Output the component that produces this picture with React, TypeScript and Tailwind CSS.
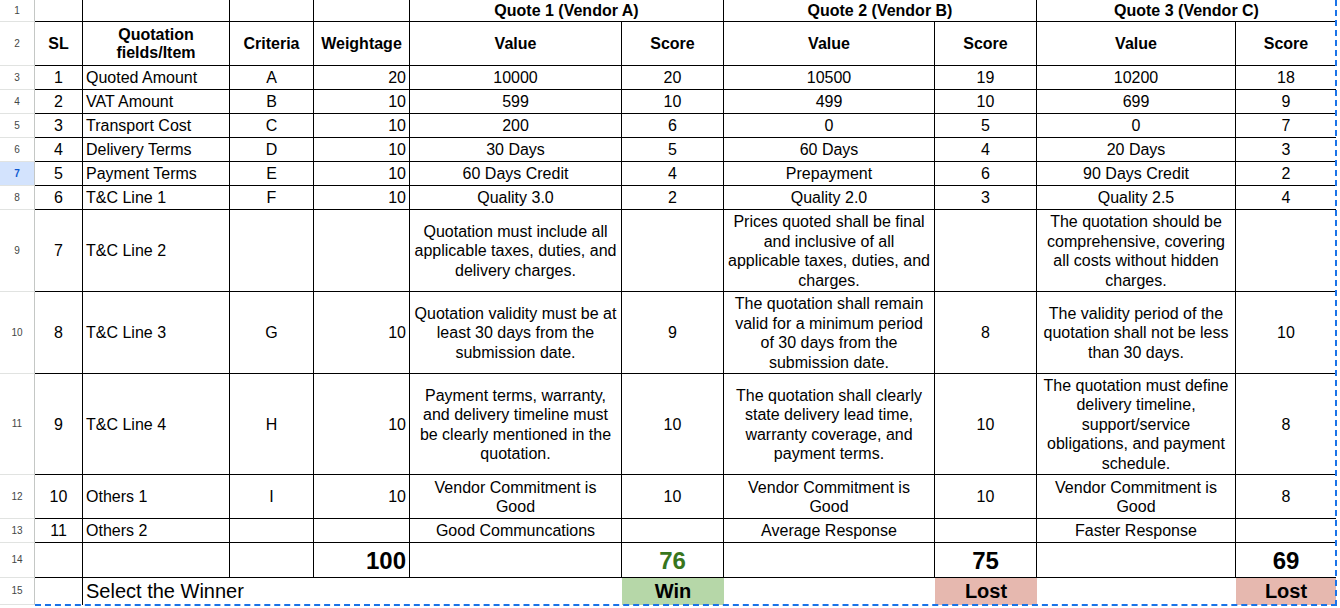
import type { ReactNode } from 'react';

type Row = [string, string, string, string, string, string, string, string, string, string];

const items: Row[] = [
  ['1', 'Quoted Amount', 'A', '20', '10000', '20', '10500', '19', '10200', '18'],
  ['2', 'VAT Amount', 'B', '10', '599', '10', '499', '10', '699', '9'],
  ['3', 'Transport Cost', 'C', '10', '200', '6', '0', '5', '0', '7'],
  ['4', 'Delivery Terms', 'D', '10', '30 Days', '5', '60 Days', '4', '20 Days', '3'],
  ['5', 'Payment Terms', 'E', '10', '60 Days Credit', '4', 'Prepayment', '6', '90 Days Credit', '2'],
  ['6', 'T&C Line 1', 'F', '10', 'Quality 3.0', '2', 'Quality 2.0', '3', 'Quality 2.5', '4'],
  [
    '7', 'T&C Line 2', '', '',
    'Quotation must include all applicable taxes, duties, and delivery charges.', '',
    'Prices quoted shall be final and inclusive of all applicable taxes, duties, and charges.', '',
    'The quotation should be comprehensive, covering all costs without hidden charges.', '',
  ],
  [
    '8', 'T&C Line 3', 'G', '10',
    'Quotation validity must be at least 30 days from the submission date.', '9',
    'The quotation shall remain valid for a minimum period of 30 days from the submission date.', '8',
    'The validity period of the quotation shall not be less than 30 days.', '10',
  ],
  [
    '9', 'T&C Line 4', 'H', '10',
    'Payment terms, warranty, and delivery timeline must be clearly mentioned in the quotation.', '10',
    'The quotation shall clearly state delivery lead time, warranty coverage, and payment terms.', '10',
    'The quotation must define delivery timeline, support/service obligations, and payment schedule.', '8',
  ],
  ['10', 'Others 1', 'I', '10', 'Vendor Commitment is Good', '10', 'Vendor Commitment is Good', '10', 'Vendor Commitment is Good', '8'],
  ['11', 'Others 2', '', '', 'Good Communcations', '', 'Average Response', '', 'Faster Response', ''],
];

function RowHead({ n, active }: { n: number; active?: boolean }) {
  return (
    <div
      className={`flex items-center justify-center border-r border-b border-r-[#c4c7c5] border-b-[#e1e3e1] text-[10px] ${
        active ? 'bg-[#d3e3fd] text-[#0b57d0] font-semibold' : 'bg-white text-[#444746]'
      }`}
    >
      {n}
    </div>
  );
}

function Cell({
  children,
  span,
  align = 'center',
  last,
  noBorder,
  className = '',
}: {
  children?: ReactNode;
  span?: 'col-span-2' | 'col-span-4';
  align?: 'left' | 'center' | 'right';
  last?: boolean;
  noBorder?: boolean;
  className?: string;
}) {
  const justify =
    align === 'left'
      ? 'justify-start text-left pl-[3px]'
      : align === 'right'
        ? 'justify-end text-right pr-[3px]'
        : 'justify-center text-center px-[3px]';
  const border = noBorder ? '' : last ? 'border-b border-black' : 'border-r border-b border-black';
  return <div className={`flex items-center pt-px ${justify} ${border} ${span ?? ''} ${className}`}>{children}</div>;
}

export default function App() {
  return (
    <div className="relative w-[1340px] h-[608px] overflow-hidden bg-white text-black font-['Liberation_Sans',Arial,sans-serif] text-[16px] leading-[19.5px]">
      <div className="grid grid-cols-[35px_48px_147px_84px_96px_212px_102px_211px_102px_199px_100px_1fr] grid-rows-[22px_44px_24px_24px_24px_24px_24px_24px_82px_82px_101px_44px_24px_35px_27px]">
        {/* row 1: vendor groups */}
        <RowHead n={1} />
        <Cell />
        <Cell />
        <Cell />
        <Cell />
        <Cell span="col-span-2" className="font-bold">Quote 1 (Vendor A)</Cell>
        <Cell span="col-span-2" className="font-bold">Quote 2 (Vendor B)</Cell>
        <Cell span="col-span-2" last className="font-bold">Quote 3 (Vendor C)</Cell>
        <div />

        {/* row 2: column titles */}
        <RowHead n={2} />
        <Cell className="font-bold">SL</Cell>
        <Cell className="font-bold leading-[18px]">Quotation fields/Item</Cell>
        <Cell className="font-bold">Criteria</Cell>
        <Cell className="font-bold">Weightage</Cell>
        <Cell className="font-bold">Value</Cell>
        <Cell className="font-bold">Score</Cell>
        <Cell className="font-bold">Value</Cell>
        <Cell className="font-bold">Score</Cell>
        <Cell className="font-bold">Value</Cell>
        <Cell last className="font-bold">Score</Cell>
        <div />

        {items.map((r, i) => (
          <div key={r[0]} className="contents">
            <RowHead n={i + 3} active={i + 3 === 7} />
            <Cell>{r[0]}</Cell>
            <Cell align="left">{r[1]}</Cell>
            <Cell>{r[2]}</Cell>
            <Cell align="right">{r[3]}</Cell>
            <Cell>{r[4]}</Cell>
            <Cell>{r[5]}</Cell>
            <Cell>{r[6]}</Cell>
            <Cell>{r[7]}</Cell>
            <Cell>{r[8]}</Cell>
            <Cell last>{r[9]}</Cell>
            <div />
          </div>
        ))}

        {/* row 14: totals */}
        <RowHead n={14} />
        <Cell />
        <Cell />
        <Cell />
        <Cell align="right" className="font-bold text-[24px]">100</Cell>
        <Cell />
        <Cell className="font-bold text-[24px] text-[#38761d]">76</Cell>
        <Cell />
        <Cell className="font-bold text-[24px]">75</Cell>
        <Cell />
        <Cell last className="font-bold text-[24px]">69</Cell>
        <div />

        {/* row 15: winner */}
        <RowHead n={15} />
        <div className="border-r border-black" />
        <Cell span="col-span-4" align="left" noBorder className="text-[20px]">Select the Winner</Cell>
        <Cell noBorder className="bg-[#b6d7a8] font-bold text-[20px]">Win</Cell>
        <div />
        <Cell noBorder className="bg-[#e6b8af] font-bold text-[20px]">Lost</Cell>
        <div />
        <Cell noBorder className="bg-[#e6b8af] font-bold text-[20px]">Lost</Cell>
        <div />
      </div>

      {/* copy marquee */}
      <div className="pointer-events-none absolute left-[35px] top-0 w-[1302px] h-[606px] border-r-2 border-b-2 border-dashed border-[#1a73e8]" />
    </div>
  );
}
